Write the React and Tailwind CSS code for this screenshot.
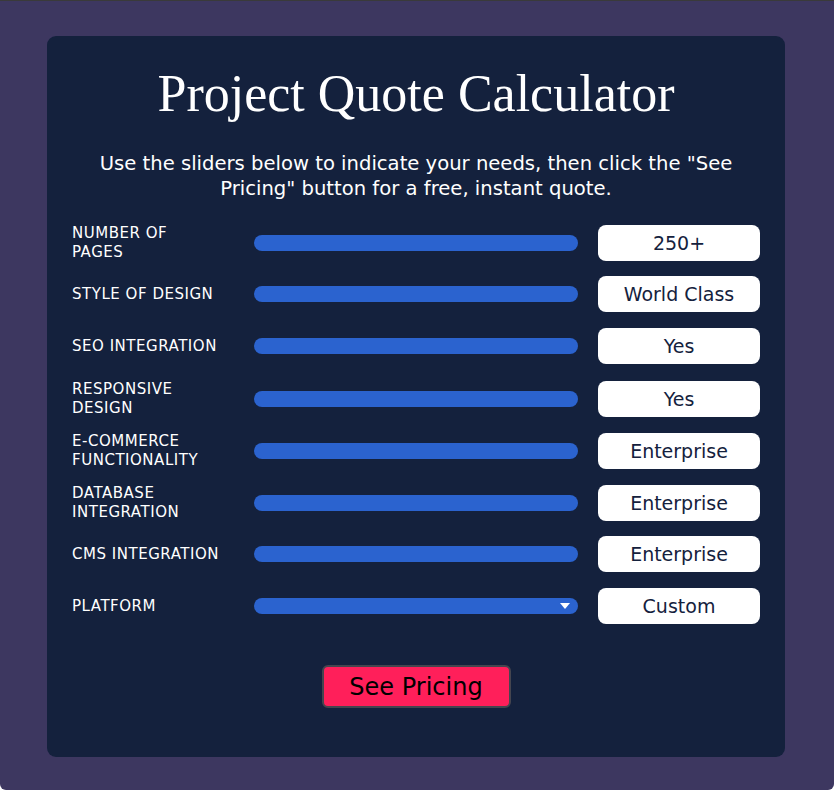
import React from "react";

const ROWS = [
  { label: "NUMBER OF\nPAGES", value: "250+" },
  { label: "STYLE OF DESIGN", value: "World Class" },
  { label: "SEO INTEGRATION", value: "Yes" },
  { label: "RESPONSIVE\nDESIGN", value: "Yes" },
  { label: "E-COMMERCE\nFUNCTIONALITY", value: "Enterprise" },
  { label: "DATABASE\nINTEGRATION", value: "Enterprise" },
  { label: "CMS INTEGRATION", value: "Enterprise" },
  { label: "PLATFORM", value: "Custom", select: true },
];

function Row({ r }) {
  return (
    <div className="grid grid-cols-[162px_324px_162px] gap-x-5 items-center h-[36px]">
      <div className="text-[15px] leading-[19px] text-white uppercase tracking-[0.035em] whitespace-pre-line">
        {r.label}
      </div>
      <div className="relative h-4 rounded-full bg-[#2b63cf]">
        {r.select && (
          <svg
            className="absolute right-[8px] top-[5px]"
            width="10"
            height="6"
            viewBox="0 0 10 6"
          >
            <path d="M0 0 L10 0 L5 6 Z" fill="white" />
          </svg>
        )}
      </div>
      <div className="h-[36px] rounded-lg bg-white flex items-center justify-center text-[19px] text-[#14213d]">
        {r.value}
      </div>
    </div>
  );
}

export default function App() {
  return (
    <div
      className="min-h-[790px] bg-[#3d3760] border-t border-[#3a3a3a] rounded-b-[6px] pt-[35px] pl-[47px] pr-[49px] pb-[32px]"
      style={{ fontFamily: "'DejaVu Sans', 'Noto Sans', sans-serif" }}
    >
      <div className="bg-[#14213d] rounded-[9px] h-[721px] px-[25px] flex flex-col">
        <h1
          className="text-center text-white text-[52px] leading-none pt-[32px]"
          style={{ fontFamily: "'Liberation Serif', 'DejaVu Serif', serif" }}
        >
          Project Quote Calculator
        </h1>
        <p className="mt-[31px] mx-auto max-w-[660px] text-center text-white text-[19.6px] leading-[25px]">
          Use the sliders below to indicate your needs, then click the "See
          Pricing" button for a free, instant quote.
        </p>
        <div className="mt-[23px] flex flex-col gap-[16px]">
          {ROWS.map((r) => (
            <Row key={r.label} r={r} />
          ))}
        </div>
        <div className="mt-[41px] flex justify-center">
          <button className="w-[189px] h-[43px] rounded-md bg-[#ff1f5a] border-2 border-[#45454f] text-black text-[24px]">
            See Pricing
          </button>
        </div>
      </div>
    </div>
  );
}
